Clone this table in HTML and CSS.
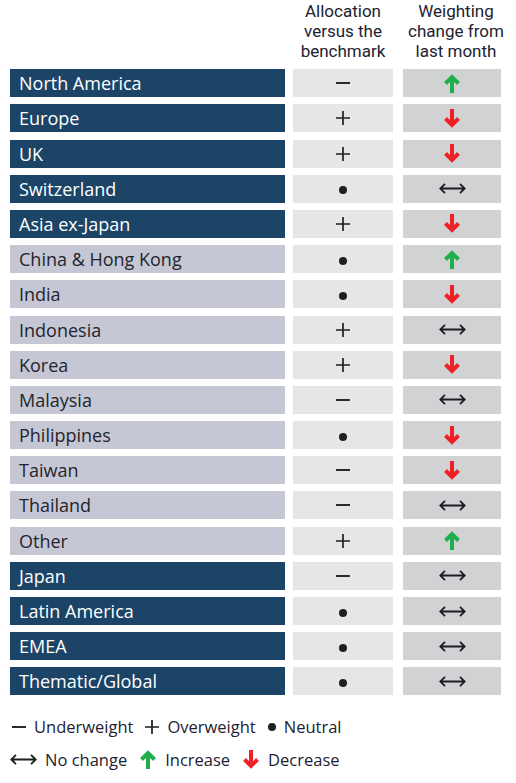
FILE: index.html
```html
<!DOCTYPE html>
<html lang="en">
<head>
    <meta charset="UTF-8">
    <meta name="viewport" content="width=device-width, initial-scale=1.0">
    <title>Regional allocation</title>
    <link rel="stylesheet" href="styles.css">
</head>
<body>
    <svg class="defs" aria-hidden="true">
        <symbol id="up" viewBox="0 0 18 19">
            <path d="M9 19 V3 M2.5 9.5 L9 3 L15.5 9.5" fill="none" stroke="currentColor" stroke-width="4"/>
        </symbol>
        <symbol id="down" viewBox="0 0 18 19">
            <path d="M9 0 V16 M2.5 9.5 L9 16 L15.5 9.5" fill="none" stroke="currentColor" stroke-width="4"/>
        </symbol>
        <symbol id="same" viewBox="0 0 27 11">
            <path d="M1 5.5 H26 M6 0.8 L1.3 5.5 L6 10.2 M21 0.8 L25.7 5.5 L21 10.2" fill="none" stroke="currentColor" stroke-width="1.8"/>
        </symbol>
        <symbol id="minus" viewBox="0 0 14 14">
            <path d="M0 7 H14" stroke="currentColor" stroke-width="1.9"/>
        </symbol>
        <symbol id="plus" viewBox="0 0 14 14">
            <path d="M0 7 H14 M7 0 V14" stroke="currentColor" stroke-width="1.7"/>
        </symbol>
    </svg>

    <div class="table">
        <div class="head-row">
            <div></div>
            <div class="col-title">Allocation<br>versus the<br>benchmark</div>
            <div class="col-title">Weighting<br>change from<br>last month</div>
        </div>

        <div class="row dark"><div class="name">North America</div><div class="alloc"><svg class="sign"><use href="#minus"/></svg></div><div class="change"><svg class="arrow up"><use href="#up"/></svg></div></div>
        <div class="row dark"><div class="name">Europe</div><div class="alloc"><svg class="sign"><use href="#plus"/></svg></div><div class="change"><svg class="arrow down"><use href="#down"/></svg></div></div>
        <div class="row dark"><div class="name">UK</div><div class="alloc"><svg class="sign"><use href="#plus"/></svg></div><div class="change"><svg class="arrow down"><use href="#down"/></svg></div></div>
        <div class="row dark"><div class="name">Switzerland</div><div class="alloc"><span class="dot"></span></div><div class="change"><svg class="same"><use href="#same"/></svg></div></div>
        <div class="row dark"><div class="name">Asia ex-Japan</div><div class="alloc"><svg class="sign"><use href="#plus"/></svg></div><div class="change"><svg class="arrow down"><use href="#down"/></svg></div></div>
        <div class="row light"><div class="name">China &amp; Hong Kong</div><div class="alloc"><span class="dot"></span></div><div class="change"><svg class="arrow up"><use href="#up"/></svg></div></div>
        <div class="row light"><div class="name">India</div><div class="alloc"><span class="dot"></span></div><div class="change"><svg class="arrow down"><use href="#down"/></svg></div></div>
        <div class="row light"><div class="name">Indonesia</div><div class="alloc"><svg class="sign"><use href="#plus"/></svg></div><div class="change"><svg class="same"><use href="#same"/></svg></div></div>
        <div class="row light"><div class="name">Korea</div><div class="alloc"><svg class="sign"><use href="#plus"/></svg></div><div class="change"><svg class="arrow down"><use href="#down"/></svg></div></div>
        <div class="row light"><div class="name">Malaysia</div><div class="alloc"><svg class="sign"><use href="#minus"/></svg></div><div class="change"><svg class="same"><use href="#same"/></svg></div></div>
        <div class="row light"><div class="name">Philippines</div><div class="alloc"><span class="dot"></span></div><div class="change"><svg class="arrow down"><use href="#down"/></svg></div></div>
        <div class="row light"><div class="name">Taiwan</div><div class="alloc"><svg class="sign"><use href="#minus"/></svg></div><div class="change"><svg class="arrow down"><use href="#down"/></svg></div></div>
        <div class="row light"><div class="name">Thailand</div><div class="alloc"><svg class="sign"><use href="#minus"/></svg></div><div class="change"><svg class="same"><use href="#same"/></svg></div></div>
        <div class="row light"><div class="name">Other</div><div class="alloc"><svg class="sign"><use href="#plus"/></svg></div><div class="change"><svg class="arrow up"><use href="#up"/></svg></div></div>
        <div class="row dark"><div class="name">Japan</div><div class="alloc"><svg class="sign"><use href="#minus"/></svg></div><div class="change"><svg class="same"><use href="#same"/></svg></div></div>
        <div class="row dark"><div class="name">Latin America</div><div class="alloc"><span class="dot"></span></div><div class="change"><svg class="same"><use href="#same"/></svg></div></div>
        <div class="row dark"><div class="name">EMEA</div><div class="alloc"><span class="dot"></span></div><div class="change"><svg class="same"><use href="#same"/></svg></div></div>
        <div class="row dark"><div class="name">Thematic/Global</div><div class="alloc"><span class="dot"></span></div><div class="change"><svg class="same"><use href="#same"/></svg></div></div>
    </div>

    <div class="legend">
        <div class="legend-line">
            <span class="key"><svg class="sign"><use href="#minus"/></svg>Underweight</span>
            <span class="key"><svg class="sign"><use href="#plus"/></svg>Overweight</span>
            <span class="key"><span class="dot"></span>Neutral</span>
        </div>
        <div class="legend-line">
            <span class="key"><svg class="same"><use href="#same"/></svg>No change</span>
            <span class="key"><svg class="arrow up"><use href="#up"/></svg>Increase</span>
            <span class="key"><svg class="arrow down"><use href="#down"/></svg>Decrease</span>
        </div>
    </div>
</body>
</html>
```

FILE: styles.css
```css
* {
    margin: 0;
    padding: 0;
    box-sizing: border-box;
}

body {
    background-color: #fff;
    color: #1d2230;
    font-family: "Open Sans", "Noto Sans", sans-serif;
    padding: 1px 0 0 10px;
}

.defs {
    display: none;
}

.table {
    width: 493px;
    display: flex;
    flex-direction: column;
    gap: 7.2px;
}

.head-row,
.row {
    display: grid;
    grid-template-columns: 275px 100px 100px;
    column-gap: 8px;
}

.head-row {
    grid-template-columns: 275px 100px 110px;
    height: 61px;
}

.col-title {
    text-align: center;
    font-family: Roboto, "Open Sans", sans-serif;
    font-size: 17px;
    line-height: 20px;
}

.row {
    height: 28px;
}

.row > div {
    display: flex;
    align-items: center;
}

.row .change {
    margin-left: 2px;
}

.name {
    padding-left: 9px;
    font-size: 18px;
    font-weight: 500;
}

.dark .name {
    background-color: #1b4467;
    color: #fff;
}

.light .name {
    background-color: #c5c7d5;
    color: #23252c;
}

.alloc,
.change {
    justify-content: center;
}

.alloc {
    background-color: #e6e6e6;
}

.change {
    background-color: #d1d2d4;
}

.sign {
    width: 14px;
    height: 14px;
    color: #1d1f24;
}

.dot {
    display: inline-block;
    width: 8px;
    height: 8px;
    border-radius: 50%;
    background-color: #1d1f24;
}

.alloc .dot {
    margin-top: 3px;
}

.arrow {
    width: 18px;
    height: 19px;
}

.arrow.up {
    color: #1eae4c;
}

.arrow.down {
    color: #ed2126;
}

.same {
    width: 27px;
    height: 11px;
    color: #1d1f24;
}

.legend {
    margin-top: 15px;
    font-size: 16.5px;
    color: #1d2230;
}

.legend-line {
    display: flex;
    align-items: center;
    height: 33px;
}

.key {
    display: flex;
    align-items: center;
    gap: 8px;
    margin-right: 12px;
}

.legend-line:first-child {
    padding-left: 2px;
}
```
